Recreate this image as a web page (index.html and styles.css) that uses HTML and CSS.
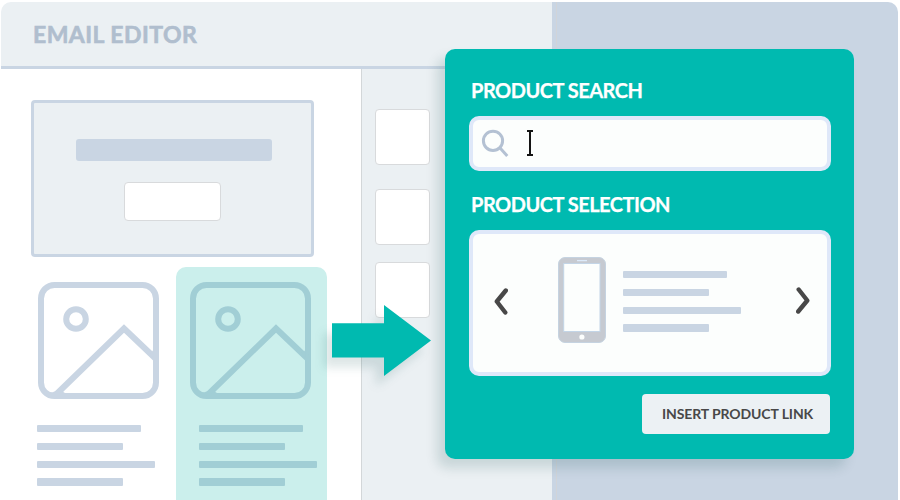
FILE: index.html
```html
<!DOCTYPE html>
<html lang="en">
<head>
<meta charset="utf-8">
<title>Email Editor</title>
<link rel="stylesheet" href="styles.css">
</head>
<body>
<svg class="symbols" aria-hidden="true">
  <symbol id="picture" viewBox="0 0 121 117">
    <rect x="3" y="3" width="115" height="111" rx="13.5"/>
    <path d="M16.5 114L86 46.5L118 77"/>
    <circle cx="38" cy="37" r="9.8"/>
    <path class="fillet" d="M11.5 110Q14.5 111.5 16.5 109V113H11.5ZM24.5 108.5Q25.5 111 28 111.2V113H20ZM111 68.5Q114.5 72 115.2 67V76Z"/>
  </symbol>
</svg>
<div class="app">
  <div class="workspace">
    <header class="header"><h1>EMAIL EDITOR</h1></header>
    <div class="panes">
      <main class="canvas">
        <section class="banner">
          <div class="banner-bar"></div>
          <div class="banner-button"></div>
        </section>
        <section class="products">
          <article class="product">
            <svg class="picture"><use href="#picture"/></svg>
            <div class="lines"><i></i><i class="short"></i><i class="long"></i><i class="short"></i></div>
          </article>
          <article class="product selected">
            <svg class="picture"><use href="#picture"/></svg>
            <div class="lines"><i></i><i class="short"></i><i class="long"></i><i class="short"></i></div>
          </article>
        </section>
      </main>
      <aside class="tools"><div class="tile"></div><div class="tile"></div><div class="tile"></div></aside>
    </div>
  </div>
  <div class="side"></div>
</div>

<svg class="arrow" viewBox="0 0 99 71"><path d="M0 18.2H52V0L99 35.5L52 71V52.6H0Z"/></svg>

<div class="dialog">
  <h2>PRODUCT SEARCH</h2>
  <div class="search">
    <svg class="glass" viewBox="0 0 28 28"><circle cx="12" cy="11.8" r="9.6"/><path d="M18.8 18.8L26.3 27"/></svg>
    <svg class="caret" viewBox="0 0 6 26"><path d="M3 1V25"/><path class="serif" d="M0 1H6M0 25H6"/></svg>
  </div>
  <h2 class="second">PRODUCT SELECTION</h2>
  <div class="selection">
    <svg class="chevron" viewBox="0 0 14 27"><path d="M11.8 2.5L2.8 13.5L11.3 24.5"/></svg>
    <svg class="phone" viewBox="0 0 48 86">
      <rect class="body" x=".5" y=".5" width="47" height="85" rx="6.5"/>
      <rect class="screen" x="5.7" y="6.5" width="36.3" height="68"/>
      <path class="speaker" d="M19 3.6H29"/>
      <circle cx="23.9" cy="80" r="2.6"/>
    </svg>
    <div class="lines"><i></i><i class="short"></i><i class="long"></i><i class="short"></i></div>
    <svg class="chevron next" viewBox="0 0 14 27"><path d="M2.7 2.5L11.3 13.5L2.2 24.5"/></svg>
  </div>
  <button class="insert">INSERT PRODUCT LINK</button>
</div>
</body>
</html>
```

FILE: styles.css
```css
* { box-sizing: border-box; }
body {
  margin: 0;
  height: 500px;
  padding: 2px 2px 0 1px;
  overflow: hidden;
  background: #fff;
  font-family: Lato, "Open Sans", sans-serif;
  --line: #c9d5e3;
  --pale: #ebf0f3;
  --teal: #00bab0;
}
h1, h2 { margin: 0; }
.symbols { position: absolute; width: 0; height: 0; }

.app {
  display: flex;
  height: 498px;
  overflow: hidden;
  border-radius: 10px 10px 0 0;
}
.workspace { display: flex; flex-direction: column; width: 551px; }
.side {
  flex: 1;
  background: var(--line);
  padding-left: 4px;
}
.side::before {
  content: "";
  display: block;
  width: 1px;
  height: 100%;
  background: #d1d4d8;
}
.header {
  display: flex;
  align-items: center;
  height: 67px;
  padding: 0 0 0 32px;
  background: var(--pale);
  border-bottom: 3px solid var(--line);
}
h1 {
  font-size: 23px;
  line-height: 28px;
  font-weight: 700;
  letter-spacing: .45px;
  color: #b0bece;
  -webkit-text-stroke: .6px #b0bece;
  stroke-linejoin: round;
}
.panes { display: flex; flex: 1; }
.canvas { width: 360px; padding: 31px 0 0 30px; background: #fff; }
.banner {
  display: flex;
  flex-direction: column;
  align-items: center;
  width: 283px;
  height: 157px;
  padding-top: 36px;
  background: var(--pale);
  border: 3px solid var(--line);
  border-radius: 4px;
}
.banner-bar {
  width: 196px;
  height: 21.5px;
  margin-left: 3px;
  border-radius: 3px;
  background: var(--line);
}
.banner-button {
  width: 97px;
  height: 39px;
  margin-top: 21px;
  background: #fff;
  border: 1px solid #d8dadc;
  border-radius: 4px;
}
.products { display: flex; padding-top: 10px; }
.product { width: 145px; height: 233px; padding: 15px 0 0 6px; color: var(--line); }
.product .picture { display: block; width: 121px; height: 117px; margin-left: 1px; }
.product .lines { margin-top: 26px; }
.selected {
  width: 151px;
  padding-left: 13px;
  color: #a1ced5;
  background: #cbefec;
  border-radius: 10px 10px 0 0;
}
.selected .lines { margin-left: 10.3px; }
.picture { fill: none; stroke: currentColor; stroke-width: 6; }
.picture path { stroke-linejoin: round; }
.lines { display: flex; flex-direction: column; gap: 10.5px; }
.lines i {
  width: 104px;
  height: 7.3px;
  border-radius: 1px;
  background: currentColor;
}
.lines .short { width: 86px; }
.lines .long { width: 118px; }
.picture .fillet, .fillet { fill: currentColor; stroke: none; }
.tools {
  flex: 1;
  padding: 40px 0 0 13.4px;
  background: var(--pale);
  border-left: 1px solid #d3d7d9;
}
.tile {
  width: 55px;
  height: 56px;
  margin-bottom: 24px;
  background: #fff;
  border: 1px solid #d8dadc;
  border-radius: 4px;
}
.tile + .tile { margin-bottom: 17px; }

.arrow {
  position: absolute;
  left: 332px;
  top: 305px;
  width: 99px;
  height: 71px;
  overflow: visible;
  fill: var(--teal);
  filter: drop-shadow(-8px 10px 5px rgba(0, 70, 70, .13));
}

.dialog {
  position: absolute;
  left: 445px;
  top: 49px;
  width: 409px;
  height: 410px;
  display: flex;
  flex-direction: column;
  padding: 28px 23px 0 24px;
  background: var(--teal);
  border-radius: 10px;
  box-shadow: -8px 9px 12px rgba(0, 65, 65, .15);
}
h2 {
  height: 26px;
  padding-left: 2px;
  font-size: 20px;
  line-height: 27px;
  font-weight: 700;
  letter-spacing: -.5px;
  color: #fff;
  -webkit-text-stroke: .25px #fff;
}
.second { margin-top: 20px; }
.search, .selection {
  display: flex;
  width: 362px;
  margin-top: 13px;
  background: #fcfefd;
  border: 4px solid #dfe8f9;
  border-radius: 10px;
}
.search { height: 55px; padding: 9px 0 0 8px; }
.glass { width: 28px; height: 28px; fill: none; stroke: #b4c1d3; stroke-width: 3; }
.caret { width: 6px; height: 26px; margin: 1px 0 0 18px; stroke: #141414; stroke-width: 2; fill: none; }
.selection { height: 146px; padding: 23px 0 0 21px; }
.chevron {
  width: 14px;
  height: 27px;
  margin-top: 31px;
  fill: none;
  stroke: #484848;
  stroke-width: 4.4;
  stroke-linecap: round;
  stroke-linejoin: round;
}
.phone { width: 48px; height: 86px; margin-left: 50px; }
.phone .body { fill: #c6cad1; stroke: #c5d3e1; }
.phone .screen { fill: #fcfefd; stroke: #c3d5e7; }
.phone .speaker { stroke: #dceafa; stroke-width: 1.3; }
.phone circle { fill: #fcfefd; }
.selection .lines { width: 118px; margin: 14px 0 0 17.3px; color: var(--line); }
.chevron.next { margin: 30px 0 0 54.7px; }
.insert {
  align-self: flex-end;
  width: 188px;
  height: 39.5px;
  margin: 18px 1px 0 0;
  padding: 0 0 0 3px;
  border: 0;
  border-radius: 4px;
  background: #ecf1f4;
  color: #484848;
  font: 700 14px/20px Lato, sans-serif;
  letter-spacing: -.1px;
}
```
